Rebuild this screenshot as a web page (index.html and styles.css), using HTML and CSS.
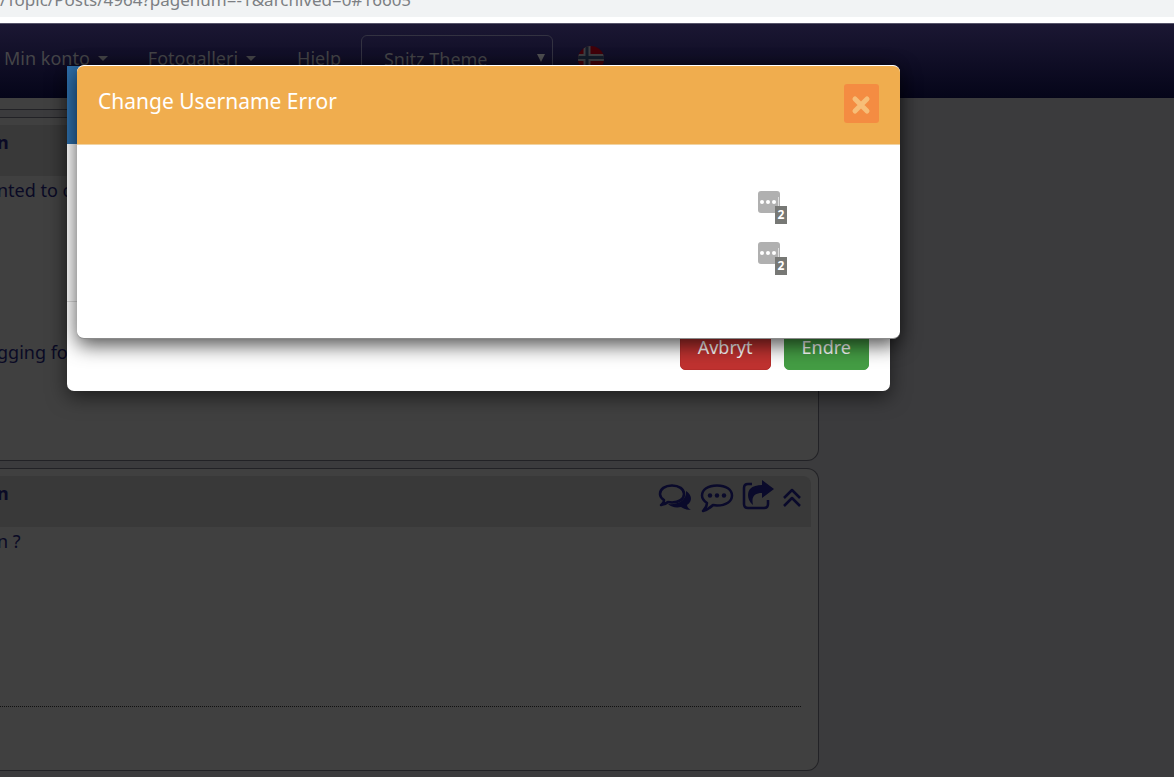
FILE: index.html
```html
<!DOCTYPE html>
<html lang="no">
<head>
<meta charset="utf-8">
<meta name="viewport" content="width=device-width, initial-scale=1">
<title>Snitz Forum</title>
<link rel="stylesheet" href="styles.css">
</head>
<body>
<div class="address-bar">/Topic/Posts/4964?pagenum=-1&amp;archived=0#16605</div>
<nav class="navbar">
  <a class="nav-link nav-account" href="#">Min konto <span class="caret"></span></a>
  <a class="nav-link nav-gallery" href="#">Fotogalleri <span class="caret"></span></a>
  <a class="nav-link nav-help" href="#">Hjelp</a>
  <div class="theme-picker">
    <select class="theme-select" aria-label="Theme"><option>Snitz Theme</option></select>
    <span class="theme-arrow"></span>
  </div>
  <a class="flag" href="#" aria-label="Norsk">
    <svg width="28" height="28" viewBox="0 0 28 28">
      <defs><clipPath id="disc"><circle cx="14" cy="14" r="13"/></clipPath></defs>
      <g clip-path="url(#disc)">
        <path fill="#42000a" d="M0 0h28v28H0z"/>
        <path stroke="#3f3f43" stroke-width="7" d="M10 0v28M0 12.500h28"/>
        <path stroke="#141c2a" stroke-width="3" d="M10 0v28M0 12.500h28"/>
      </g>
    </svg>
  </a>
</nav>
<main class="posts">
  <section class="post post-previous"></section>
  <section class="post post-first">
    <header class="post-header"><strong>n</strong></header>
    <p class="post-text">nted to change</p>
    <p class="post-text post-text-late">gging for</p>
  </section>
  <section class="post post-second">
    <header class="post-header"><strong>n</strong>
      <div class="post-tools">
        <a href="#" aria-label="Comments"><svg width="34" height="30" viewBox="0 0 34 30"><path class="solid" d="M28 8c6 4 7 10 1 14 0 2 2 4 4 5-4 0-7-1-10-3-5 1-10 0-13-3 10 1 19-4 18-13z"/><path class="line" d="M14 2.500c7 0 12 3.500 12 8.500s-5 8.500-12 8.500l-4-.5c-2 2-4 2.500-7 3 2-1 3-3 3-5-3-2-4-4-4-6 0-5 5-8.500 12-8.500z"/></svg></a>
        <a href="#" aria-label="Quote"><svg width="34" height="30" viewBox="0 0 34 30"><path class="line" d="M17 2.500c9 0 15 4 15 10s-6 10-15 10l-4-.5c-3 3-6 5-10 6 2-2 4-5 4-8-3-2-5-4-5-7.500 0-6 6-10 15-10z"/><g class="solid"><circle cx="10" cy="12.500" r="2.200"/><circle cx="17" cy="12.500" r="2.200"/><circle cx="24" cy="12.500" r="2.200"/></g></svg></a>
        <a href="#" aria-label="Share"><svg width="32" height="30" viewBox="0 0 32 30"><path class="line" d="M10 1H6Q2 1 2 5v16q0 4 4 4h16q4 0 4-4v-4"/><path class="solid" d="M20-3l12 9-12 9v-5C13 10 9 13 11 22 5 17 5 10 8 6c3-3 7-4 12-4z"/></svg></a>
        <a href="#" aria-label="Top"><svg width="20" height="30" viewBox="0 0 20 30"><path class="line" d="M2 15l8-8 8 8M2 23l8-8 8 8"/></svg></a>
      </div>
    </header>
    <p class="post-text">n ?</p>
    <hr class="signature-line">
  </section>
</main>

<div class="modal modal-back">
  <div class="modal-header modal-header-blue"></div>
  <div class="modal-body modal-body-back"></div>
  <div class="modal-footer">
    <button class="btn btn-cancel" type="button">Avbryt</button>
    <button class="btn btn-save" type="button">Endre</button>
  </div>
</div>

<div class="modal modal-front" role="dialog" aria-labelledby="error-title">
  <div class="modal-header modal-header-warning">
    <h4 class="modal-title" id="error-title">Change Username Error</h4>
    <button class="close" type="button" aria-label="Close"><svg width="20" height="20" viewBox="0 0 20 20"><path d="M4 4l12 12M16 4L4 16"/></svg></button>
  </div>
  <div class="modal-body modal-body-front">
    <div class="key-badge"><span class="key-dots"><i></i><i></i><i></i><b></b></span><span class="key-count">2</span></div>
    <div class="key-badge"><span class="key-dots"><i></i><i></i><i></i><b></b></span><span class="key-count">2</span></div>
  </div>
</div>
</body>
</html>
```
FILE: styles.css
```css
* { box-sizing: border-box; }
html { height: 100%; }
body {
  margin: 0;
  min-height: 100%;
  position: relative;
  overflow: hidden;
  background: #3b3b3d;
  color: #0a0a25;
  font: 18px/24px Tahoma, "Noto Sans", sans-serif;
}
a { color: inherit; text-decoration: none; }

.address-bar {
  height: 23px;
  overflow: hidden;
  background: #f1f3f4;
  border-bottom: 6px solid #fff;
  color: #7c7f83;
  font-size: 17px;
  line-height: 0;
  white-space: nowrap;
}

.navbar {
  height: 75px;
  display: flex;
  align-items: flex-start;
  padding: 11px 4px 0;
  border-top: 1px solid #56546a;
  background: linear-gradient(#1b1733, #050519);
  color: #454548;
}
.nav-link { display: flex; align-items: center; gap: 8px; padding-top: 11px; }
.nav-account { margin-right: 40px; }
.nav-gallery { margin-right: 41px; }
.nav-help { margin-right: 20px; }
.caret { border: 5px solid transparent; border-top-color: #454548; border-bottom: 0; }
.theme-picker { position: relative; width: 192px; margin-right: 24px; }
.theme-select {
  appearance: none;
  width: 100%;
  height: 48px;
  padding: 0 22px;
  border: 1px solid #333241;
  border-radius: 6px;
  background: transparent;
  color: #454548;
  font: inherit;
}
.theme-arrow {
  position: absolute;
  top: 19px;
  right: 8px;
  border: 4px solid transparent;
  border-top: 8px solid #505052;
  border-bottom: 0;
}
.flag { padding-top: 10px; }

.posts { width: 70%; margin-left: -3px; }
.post {
  margin-bottom: 7px;
  padding: 7px;
  border: 1px solid #222226;
  border-left: 0;
  border-radius: 0 12px 12px 0;
  background: #404040;
}
.post-previous { height: 12px; padding: 0; border-top: 0; border-radius: 0; }
.post-first { min-height: 344px; padding-left: 0; }
.post-second { min-height: 303px; padding-left: 0; }
.post-header {
  display: flex;
  justify-content: space-between;
  height: 51px;
  padding: 5px 9px 0 0;
  border-radius: 0 8px 0 0;
  background: #393939;
}
.post-first .post-header { border-radius: 0; }
.post-text { margin: 0; padding-top: 2px; }
.post-text-late { padding-top: 138px; }
.post-tools { display: flex; gap: 8px; padding-top: 2px; }
.post-tools svg { display: block; overflow: visible; }
.line { fill: none; stroke: #0a0a2b; stroke-width: 2.500; stroke-linejoin: round; }
.solid { fill: #0a0a2b; }
.signature-line { margin: 153px 10px 0 0; border: 0; border-top: 1px dotted #101010; }

.modal {
  position: absolute;
  width: 70.1%;
  border-radius: 7px;
  background: #fff;
  box-shadow: 0 6px 20px rgba(0, 0, 0, .55);
  overflow: hidden;
}
.modal-back { top: 66px; left: 67px; border-top-left-radius: 0; }
.modal-front {
  top: 65px;
  left: 77px;
  border-top: 1px solid #fff;
  border-bottom: 1px solid #8a8a8a;
  box-shadow: 0 6px 20px rgba(0, 0, 0, .7);
}
.modal-header { height: 78px; }
.modal-header-blue { background: #2d6da8; }
.modal-header-warning {
  display: flex;
  align-items: flex-start;
  justify-content: space-between;
  height: 79px;
  padding: 18px 21px 0;
  background: #f0ad4e;
  border-bottom: 1px solid #f1d3a2;
}
.modal-title { margin: 2px 0 0; color: #fff; font-size: 21px; font-weight: 400; line-height: 30px; }
.close {
  display: grid;
  place-items: center;
  width: 35px;
  height: 39px;
  padding: 3px 0 0;
  border: 0;
  border-radius: 3px;
  background: #f48c42;
}
.close path { stroke: #f7be78; stroke-width: 5; stroke-linecap: round; }
.modal-body-back { height: 158px; border-bottom: 1px solid #ddd; }
.modal-footer { display: flex; justify-content: flex-end; gap: 13px; padding: 21px; }
.btn {
  height: 47px;
  padding: 0 17px;
  border: 1px solid;
  border-radius: 5px;
  color: #fff;
  font: inherit;
}
.btn-cancel { background: #c03230; border-color: #b52d2b; }
.btn-save { background: #449d44; border-color: #449d44; }
.modal-body-front {
  display: flex;
  flex-direction: column;
  align-items: flex-end;
  gap: 18px;
  min-height: 193px;
  padding: 46px 113px 0 0;
}
.key-badge { position: relative; width: 29px; height: 33px; }
.key-dots {
  display: flex;
  align-items: center;
  gap: 2px;
  width: 22px;
  height: 22px;
  padding-left: 2px;
  border-radius: 3px;
  background: #b0b0b0;
}
.key-dots i { width: 4px; height: 4px; border-radius: 2px; background: #fff; }
.key-dots b { width: 1px; height: 10px; background: #ddd; }
.key-count {
  position: absolute;
  right: 0;
  bottom: 0;
  width: 12px;
  height: 18px;
  background: #777875;
  color: #fff;
  font-size: 12px;
  font-weight: 700;
  line-height: 18px;
  text-align: center;
}
```
